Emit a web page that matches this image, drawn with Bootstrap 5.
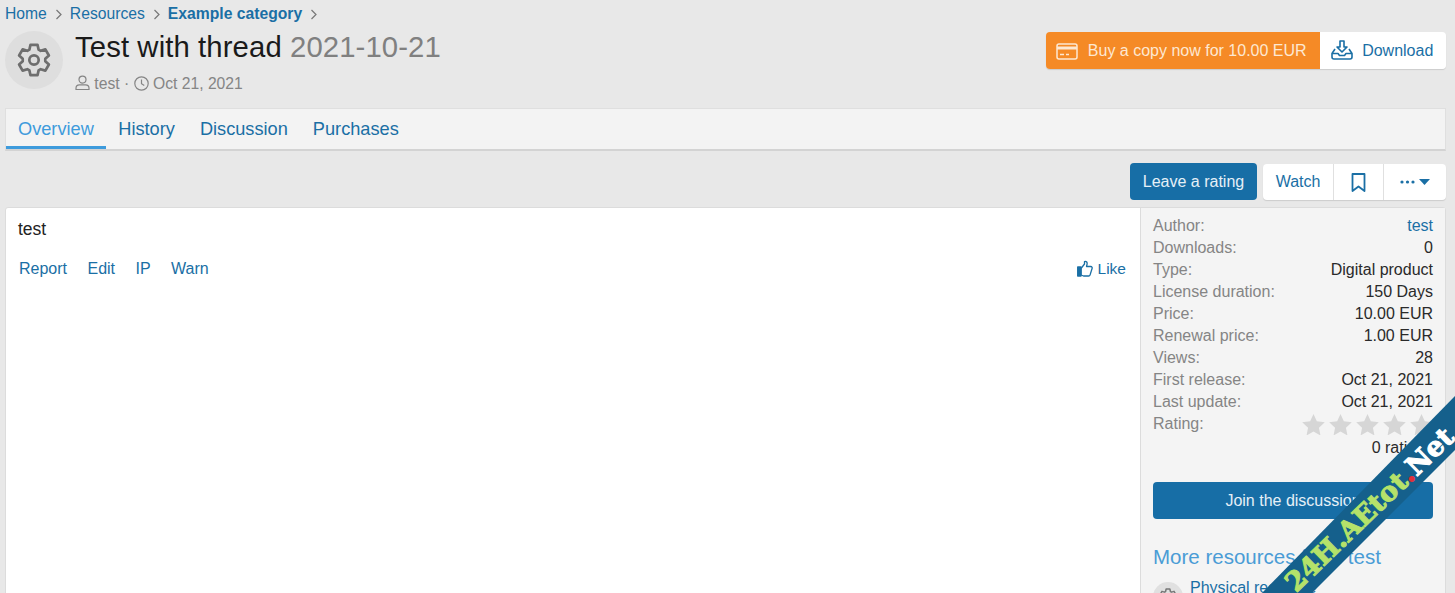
<!DOCTYPE html>
<html lang="en">
<head>
  <meta charset="UTF-8" />
  <title>Test with thread</title>
  <link href="https://cdn.jsdelivr.net/npm/bootstrap@5.3.3/dist/css/bootstrap.min.css" rel="stylesheet" />
  <style>
    html, body { height: 100%; overflow: hidden; }
    body {
      background: #e8e8e8;
      font-family: "Liberation Sans", Arial, sans-serif;
      color: #1f1f1f;
      font-size: 16px;
      padding: 0 9px 0 5px;
    }
    a { color: #1a6fa5; text-decoration: none; }

    .crumbs { height: 27px; margin: 0; padding: 2px 0 0 0; font-size: 15.7px; line-height: 24px; }
    .crumbs .breadcrumb-item { padding-left: 0; }
    .crumbs .breadcrumb-item + .breadcrumb-item::before { display: none; }
    .crumbs .sep { display: inline-block; width: 23px; text-align: center; color: #777; vertical-align: -1px; }
    .crumbs .sep svg { display: inline-block; vertical-align: 0; }

    .head-row { height: 81px; }
    .gear-circle { width: 58px; height: 58px; margin-top: 4px; background: #dedede; flex: none; }
    .title-box { margin-left: 12px; }
    .page-title { font-size: 29.3px; line-height: 36px; font-weight: 400; color: #1a1a1a; margin: 2px 0 0 0; letter-spacing: .1px; }
    .page-title span { color: #808080; }
    .meta-line { font-size: 15.7px; color: #858585; line-height: 20px; margin-top: 9px; }
    .meta-line svg { vertical-align: -2px; }

    .buy-group { margin-top: 5px; height: 37px; border-radius: 4px; box-shadow: 0 1px 1px rgba(0,0,0,.12); }
    .btn-buy { width: 275px; padding: 0 4px 0 0; background: #f58a26; color: #fde8d2; font-size: 16px; border: 0; border-radius: 4px 0 0 4px; }
    .btn-get { width: 126px; padding: 0 2px 0 0; background: #fff; color: #1a6fa5; font-size: 16px; border: 0; border-radius: 0 4px 4px 0; }
    .btn-buy:hover, .btn-get:hover { background: inherit; color: inherit; }
    .btn-buy svg, .btn-get svg { vertical-align: -4px; margin-right: 5px; }

    .tab-bar { height: 43px; background: #f3f3f3; border: 1px solid #dfdfdf; border-bottom: 2px solid #d3d3d3; margin: 0; }
    .tab-bar .nav-link { color: #1a6fa5; font-size: 18.2px; padding: 2px 12.5px 0 12.5px; border-bottom: 3px solid transparent; height: 40px; line-height: 36px; }
    .tab-bar .nav-link.active { color: #3e9bdc; border-bottom-color: #3e9bdc; padding: 2px 12px 0 12px; }

    .tool-row { height: 56px; padding-top: 12px; }
    .btn-rate { width: 127px; height: 37px; padding: 0; background: #176ea6; color: #e6f0f7; font-size: 16px; border: 0; border-radius: 4px; margin-right: 6px; }
    .tool-group { height: 36px; margin-top: 1px; background: #fff; border-radius: 4px; box-shadow: 0 1px 1px rgba(0,0,0,.12); }
    .tool-group > div { display: flex; align-items: center; justify-content: center; color: #1a6fa5; font-size: 16px; border-left: 1px solid #e0e0e0; }
    .tool-group > div:first-child { border-left: 0; }
    .t-watch { width: 70px; }
    .t-mark { width: 50px; }
    .t-more { width: 63px; }

    .main-block { height: 600px; background: #fff; border: 1px solid #dcdcdc; border-radius: 3px 3px 0 0; }
    .post-col { padding: 10px 14px 0 12px; font-size: 16px; }
    .post-text { line-height: 22px; color: #222; font-size: 17.5px; }
    .post-links { margin-top: 19px; line-height: 20px; font-size: 16px; padding-left: 1px; }
    .post-links a { margin-right: 16px; }
    .post-links a.like-link { margin-right: 0; font-size: 15.5px; }
    .post-links svg { vertical-align: -3px; }

    .side-col { width: 305px; flex: none; background: #f4f4f4; border-left: 1px solid #dcdcdc; padding: 7px 12px 0 12px; font-size: 16px; }
    .fact-row { display: flex; justify-content: space-between; height: 22px; line-height: 22px; color: #2a2a2a; }
    .fact-row > span:first-child { color: #858585; }
    .stars { display: flex; gap: 4px; padding-top: 1px; }
    .count-line { text-align: right; line-height: 22px; height: 22px; margin-top: 2px; color: #2a2a2a; }
    .btn-join { width: 100%; height: 37px; padding: 0; margin-top: 23px; background: #176ea6; color: #e6f0f7; font-size: 16px; border: 0; border-radius: 4px; }
    .more-head { font-size: 20.5px; line-height: 26px; color: #4a9cd6; margin: 25px 0 0 0; font-weight: 400; }
    .more-item { margin-top: 6px; }
    .more-thumb { width: 30px; height: 30px; background: #e0e0e0; flex: none; margin-top: 6px; margin-right: 7px; }

    .ribbon { position: absolute; right: 0; bottom: 0; width: 200px; height: 200px; pointer-events: none; }
  </style>
</head>
<body>

<!-- Breadcrumb -->
<ol class="breadcrumb crumbs">
  <li class="breadcrumb-item"><a href="#">Home</a><span class="sep"><svg width="7" height="11" viewBox="0 0 7 11" fill="none" stroke="currentColor" stroke-width="1.2"><path d="M1.5 1 6 5.5 1.5 10"/></svg></span></li>
  <li class="breadcrumb-item"><a href="#">Resources</a><span class="sep"><svg width="7" height="11" viewBox="0 0 7 11" fill="none" stroke="currentColor" stroke-width="1.2"><path d="M1.5 1 6 5.5 1.5 10"/></svg></span></li>
  <li class="breadcrumb-item"><a href="#" class="fw-bold">Example category</a><span class="sep"><svg width="7" height="11" viewBox="0 0 7 11" fill="none" stroke="currentColor" stroke-width="1.2"><path d="M1.5 1 6 5.5 1.5 10"/></svg></span></li>
</ol>

<!-- Title row -->
<div class="d-flex justify-content-between head-row">
  <div class="d-flex">
    <div class="gear-circle rounded-circle d-flex align-items-center justify-content-center">
      <svg width="34" height="34" viewBox="0 0 24 24" fill="none" stroke="#6e6e6e" stroke-width="1.9" stroke-linejoin="round">
        <circle cx="12" cy="12" r="3.3"/>
        <path d="M8.75 4.69 9.52 1.29H14.48L15.25 4.69 16.7 5.53 20.04 4.5 22.52 8.79 19.96 11.16V12.84L22.52 15.21 20.04 19.5 16.7 18.47 15.25 19.31 14.48 22.71H9.52L8.75 19.31 7.3 18.47 3.96 19.5 1.48 15.21 4.04 12.84V11.16L1.48 8.79 3.96 4.5 7.3 5.53z"/>
      </svg>
    </div>
    <div class="title-box">
      <h1 class="page-title">Test with thread <span>2021-10-21</span></h1>
      <div class="meta-line">
        <svg width="15" height="16" viewBox="0 0 15 16" fill="none" stroke="#858585" stroke-width="1.2"><circle cx="7.5" cy="4.6" r="3.5"/><path d="M1 14.5v-1.3c0-2 1.6-3.4 3.4-3.4h6.2c1.8 0 3.4 1.4 3.4 3.4v1.3z"/></svg>
        test ·
        <svg width="15" height="15" viewBox="0 0 15 15" fill="none" stroke="#858585" stroke-width="1.2"><circle cx="7.5" cy="7.5" r="6.7"/><path d="M7.5 3.5v4.2l2.8 1.8"/></svg>
        Oct 21, 2021
      </div>
    </div>
  </div>
  <div class="btn-group buy-group">
    <button class="btn btn-buy">
      <svg width="22" height="17" viewBox="0 0 22 17" fill="none" stroke="#fde8d2" stroke-width="1.5"><rect x="1" y="1" width="20" height="15" rx="2"/><path d="M1 5h20" stroke-width="3"/><path d="M4 11.5h4M10 11.5h3"/></svg>
      Buy a copy now for 10.00 EUR
    </button>
    <button class="btn btn-get">
      <svg width="22" height="20" viewBox="0 0 22 20" fill="none" stroke="#1a6fa5" stroke-width="1.6" stroke-linejoin="round"><path d="M9 1h4v6h3l-5 5-5-5h3z"/><path d="M4 9 1 13.5V17a2 2 0 0 0 2 2h16a2 2 0 0 0 2-2v-3.500L18 9"/><path d="M1 13.500h6l1.500 2h5l1.500-2h6"/></svg>
      Download
    </button>
  </div>
</div>

<!-- Tabs -->
<ul class="nav tab-bar">
  <li class="nav-item"><a class="nav-link active" href="#">Overview</a></li>
  <li class="nav-item"><a class="nav-link" href="#">History</a></li>
  <li class="nav-item"><a class="nav-link" href="#">Discussion</a></li>
  <li class="nav-item"><a class="nav-link" href="#">Purchases</a></li>
</ul>

<!-- Actions -->
<div class="d-flex justify-content-end tool-row">
  <button class="btn btn-rate">Leave a rating</button>
  <div class="d-flex tool-group">
    <div class="t-watch">Watch</div>
    <div class="t-mark">
      <svg width="15" height="19" viewBox="0 0 15 19" fill="none" stroke="#1a6fa5" stroke-width="1.8" stroke-linejoin="round"><path d="M1.500 1h12v17l-6-4.500-6 4.500z"/></svg>
    </div>
    <div class="t-more gap-1">
      <svg width="15" height="4" viewBox="0 0 15 4" fill="#1a6fa5"><circle cx="2" cy="2" r="1.600"/><circle cx="7.500" cy="2" r="1.600"/><circle cx="13" cy="2" r="1.600"/></svg>
      <svg width="11" height="6" viewBox="0 0 11 6" fill="#1a6fa5"><path d="M0 0h11L5.500 6z"/></svg>
    </div>
  </div>
</div>

<!-- Main block -->
<div class="d-flex main-block">
  <div class="flex-grow-1 post-col">
    <div class="post-text">test</div>
    <div class="d-flex justify-content-between post-links">
      <div>
        <a href="#">Report</a>
        <a href="#">Edit</a>
        <a href="#">IP</a>
        <a href="#">Warn</a>
      </div>
      <a href="#" class="like-link">
        <svg width="16" height="17" viewBox="0 0 16 17" fill="none" stroke="#1a6fa5" stroke-width="1.300" stroke-linejoin="round"><rect x=".7" y="7" width="3.300" height="9" fill="#1a6fa5"/><path d="M4 8.500 7.500 4V1.500C9.500.8 10.500 2.500 10 4.500L9.500 6.500h4.200c1.300 0 1.800 1.300 1.300 2.300l-2 6.300c-.2.600-.7.900-1.300.9H6.500L4 15z"/></svg>
        Like
      </a>
    </div>
  </div>

  <div class="side-col">
    <div class="fact-row"><span>Author:</span><a href="#">test</a></div>
    <div class="fact-row"><span>Downloads:</span><span>0</span></div>
    <div class="fact-row"><span>Type:</span><span>Digital product</span></div>
    <div class="fact-row"><span>License duration:</span><span>150 Days</span></div>
    <div class="fact-row"><span>Price:</span><span>10.00 EUR</span></div>
    <div class="fact-row"><span>Renewal price:</span><span>1.00 EUR</span></div>
    <div class="fact-row"><span>Views:</span><span>28</span></div>
    <div class="fact-row"><span>First release:</span><span>Oct 21, 2021</span></div>
    <div class="fact-row"><span>Last update:</span><span>Oct 21, 2021</span></div>
    <div class="fact-row">
      <span>Rating:</span>
      <span class="stars">
        <svg width="23" height="21" viewBox="0 0 24 22" fill="#d6d6d6"><path d="M12 0l3.500 7.600 8.300 1-6.100 5.700 1.600 8.200L12 18.400 4.700 22.500l1.600-8.200L.2 8.600l8.300-1z"/></svg>
        <svg width="23" height="21" viewBox="0 0 24 22" fill="#d6d6d6"><path d="M12 0l3.500 7.600 8.300 1-6.100 5.700 1.600 8.200L12 18.400 4.700 22.500l1.600-8.200L.2 8.600l8.300-1z"/></svg>
        <svg width="23" height="21" viewBox="0 0 24 22" fill="#d6d6d6"><path d="M12 0l3.500 7.600 8.300 1-6.100 5.700 1.600 8.200L12 18.400 4.700 22.500l1.600-8.200L.2 8.600l8.300-1z"/></svg>
        <svg width="23" height="21" viewBox="0 0 24 22" fill="#d6d6d6"><path d="M12 0l3.500 7.600 8.300 1-6.100 5.700 1.600 8.200L12 18.400 4.700 22.500l1.600-8.200L.2 8.600l8.300-1z"/></svg>
        <svg width="23" height="21" viewBox="0 0 24 22" fill="#d6d6d6"><path d="M12 0l3.500 7.600 8.300 1-6.100 5.700 1.600 8.200L12 18.400 4.700 22.500l1.600-8.200L.2 8.600l8.300-1z"/></svg>
      </span>
    </div>
    <div class="count-line">0 ratings</div>
    <button class="btn btn-join">Join the discussion</button>
    <h3 class="more-head">More resources from test</h3>
    <div class="d-flex more-item">
      <div class="more-thumb rounded-circle d-flex align-items-center justify-content-center">
        <svg width="18" height="18" viewBox="0 0 24 24" fill="none" stroke="#777" stroke-width="2" stroke-linejoin="round"><circle cx="12" cy="12" r="3.300"/><path d="M8.75 4.69 9.52 1.29H14.48L15.25 4.69 16.7 5.53 20.04 4.5 22.52 8.79 19.96 11.16V12.84L22.52 15.21 20.04 19.5 16.7 18.47 15.25 19.31 14.48 22.71H9.52L8.75 19.31 7.3 18.47 3.96 19.5 1.48 15.21 4.04 12.84V11.16L1.48 8.79 3.96 4.5 7.3 5.53z"/></svg>
      </div>
      <a href="#">Physical resource</a>
    </div>
  </div>
</div>

<!-- Watermark ribbon -->
<svg class="ribbon" viewBox="0 0 200 200">
  <polygon points="200,3 200,57 57,200 7,200" fill="#15608c"/>
  <text x="114" y="126" text-anchor="middle" transform="rotate(-44 114 116)" font-family="DejaVu Serif, serif" font-weight="700" font-size="27" textLength="222" lengthAdjust="spacingAndGlyphs" stroke-width="1" fill="#b5e26a" stroke="#b5e26a">24H.AEtot<tspan fill="#e0303a" stroke="#e0303a">.</tspan><tspan fill="#ffffff" stroke="#ffffff">Net</tspan></text>
</svg>

<script src="https://cdn.jsdelivr.net/npm/bootstrap@5.3.3/dist/js/bootstrap.bundle.min.js"></script>
</body>
</html>
